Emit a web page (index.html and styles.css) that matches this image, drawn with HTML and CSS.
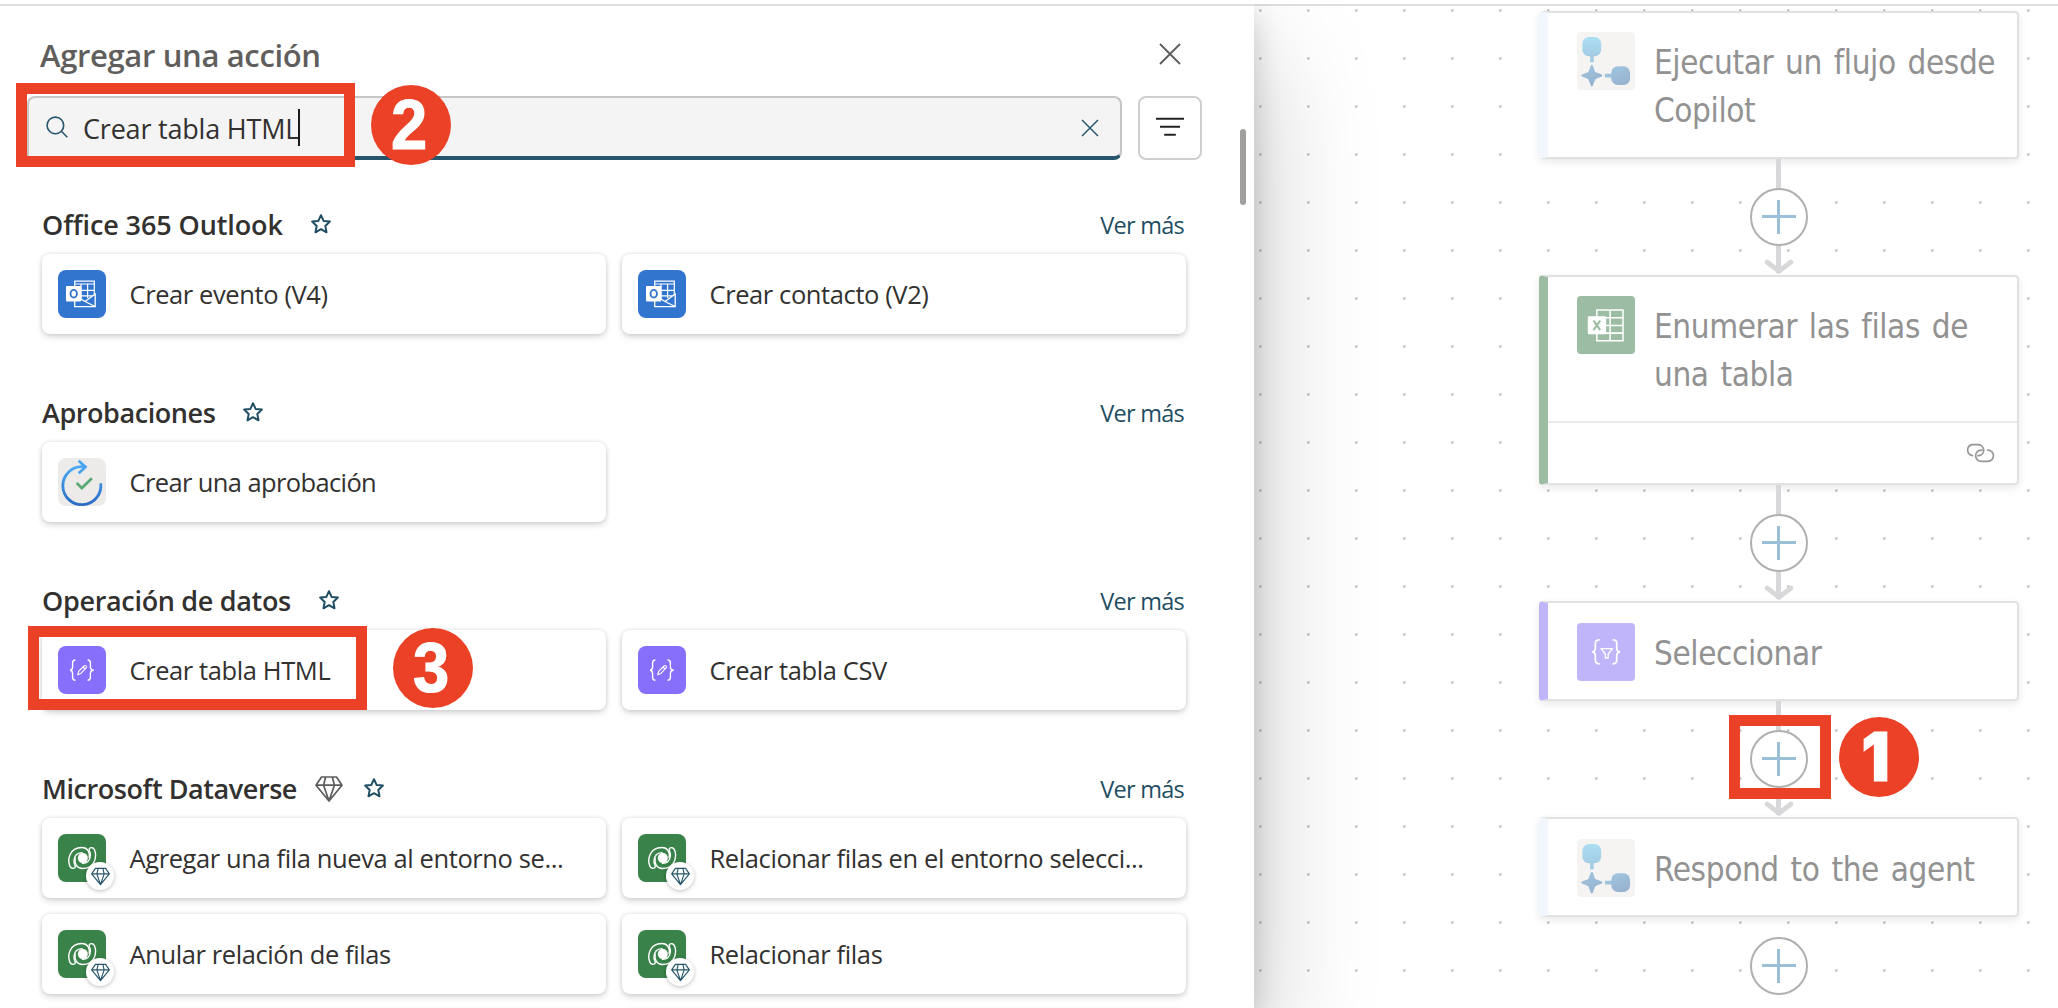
FILE: index.html
```html
<!DOCTYPE html>
<html lang="es">
<head>
<meta charset="utf-8">
<title>Agregar una acción</title>
<link rel="stylesheet" href="styles.css">
</head>
<body>
<svg class="defs" width="0" height="0" aria-hidden="true">
  <defs>
    <linearGradient id="gApproval" x1="0" y1="0" x2="0" y2="1"><stop offset="0" stop-color="#4aa9f3"/><stop offset="1" stop-color="#2b6bc6"/></linearGradient>
    <linearGradient id="gSky" x1="0" y1="0" x2="0" y2="1"><stop offset="0" stop-color="#acdff3"/><stop offset="1" stop-color="#a4cde5"/></linearGradient>
    <linearGradient id="gSteel" x1="0" y1="0" x2="0.4" y2="1"><stop offset="0" stop-color="#a0c6df"/><stop offset="1" stop-color="#98b3d0"/></linearGradient>
    <symbol id="star" viewBox="0 0 20 20"><path d="M10 1.2 12.6 6.900 18.900 7.600 14.300 11.900 15.500 18.300 10 15.200 4.500 18.300 5.700 11.900 1.100 7.600 7.400 6.900Z" fill="none" stroke="#1f4e63" stroke-width="2" stroke-linejoin="round"/></symbol>
    <symbol id="diamond" viewBox="0 0 28 26"><path d="M6.5 1H21.5L27 9.2 14 25 1 9.2ZM1 9.2H27M10.6 1 8.6 9.2 14 25 19.4 9.2 17.4 1" fill="none" stroke="currentColor" stroke-width="1.7" stroke-linejoin="round"/></symbol>
    <symbol id="outlook" viewBox="0 0 48 48">
      <path d="M16.7 16V11.2H36.3V27M16.7 14H36.3M23 14V30M29.6 14V28M23 20.3H36.3M23 25.8H36.3" fill="none" stroke="#fff" stroke-width="1.2"/>
      <path d="M27 31.5 37.200 24V36.600Z" fill="#3275cf"/>
      <path d="M16.7 31V36.6H37.2V24L27 31.5M27 31.5 37 36.5M23 29 27 31.5" fill="none" stroke="#fff" stroke-width="1.3"/>
      <rect x="8" y="16" width="15.4" height="15.4" rx=".8" fill="#fff"/>
      <ellipse cx="15.7" cy="23.7" rx="3.2" ry="3.8" fill="none" stroke="#3275cf" stroke-width="1.9"/>
    </symbol>
    <symbol id="approval" viewBox="0 0 48 48">
      <path d="M42.8 26.3A19 19 0 1 1 23.8 8.7H27" fill="none" stroke="url(#gApproval)" stroke-width="2.8" stroke-linecap="round"/>
      <path d="M20.7 2.7 27.4 8.9 20.7 15.3" fill="none" stroke="#4aa3ee" stroke-width="2.8"/>
      <path d="M18.7 25 23.8 30 33.9 20.2" fill="none" stroke="#58a974" stroke-width="2.7"/>
    </symbol>
    <symbol id="compose" viewBox="0 0 48 48">
      <path d="M17.4 14Q14.6 14 14.6 17V21Q14.6 24 12 24.2 14.6 24.4 14.6 27.4V31.3Q14.6 34.2 17.4 34.2M29.6 14Q32.4 14 32.4 17V21Q32.4 24 35.8 24.2 32.4 24.4 32.4 27.4V31.3Q32.4 34.2 29.6 34.2" fill="none" stroke="#fff" stroke-width="1.4"/>
      <path d="M19.7 28.7 20.8 25.2 26 20Q27.4 19 28.2 20 29 21 28 22.2L22.9 27.4ZM25 21 27 23" fill="none" stroke="#fff" stroke-width="1.1" stroke-linejoin="round"/>
    </symbol>
    <symbol id="dataverse" viewBox="0 0 48 48">
      <g id="blade" fill="none" stroke="#fff" stroke-width="1.4" stroke-linecap="round">
        <path d="M17 33.4C15.5 34.9 13 34.6 12 32.4 9.4 26.5 10.6 13.6 24 13.5 29.5 13.5 32.3 18.5 31.2 23.6M17 33.4C18.4 31.5 15.6 31 16 26.5 16.4 21.5 19.3 18.8 24 18.6"/>
      </g>
      <use href="#blade" transform="rotate(180 24.2 24)"/>
      <circle cx="24.800" cy="24.100" r="5" fill="#fff"/>
    </symbol>
    <symbol id="copilot" viewBox="0 0 57 57">
      <rect x="5.3" y="5" width="18.7" height="19" rx="6.5" fill="url(#gSky)"/>
      <rect x="13" y="23" width="3.6" height="7" fill="#a4cde5"/>
      <path d="M14.7 32.4C16.3 32.4 17 38.5 18.4 39.7 19.8 41 25.2 41.5 25.2 43.2 25.2 45 19.8 45.4 18.4 46.8 17 48 16.3 54 14.7 54 13.1 54 12.4 48 11 46.8 9.6 45.4 4.2 45 4.2 43.2 4.2 41.5 9.6 41 11 39.7 12.4 38.5 13.1 32.4 14.7 32.4Z" fill="url(#gSteel)"/>
      <rect x="27.7" y="41.4" width="7" height="3.7" fill="#9fc3dc"/>
      <rect x="34" y="34" width="18.6" height="18.5" rx="6.5" fill="url(#gSteel)"/>
    </symbol>
    <symbol id="excel" viewBox="0 0 57 57">
      <path d="M19.7 13.8H45.6V44.3H19.7ZM32.8 13.8V44.3M19.7 21.6H45.6M19.7 29.2H45.6M19.7 36.8H45.6" fill="none" stroke="#fff" stroke-width="1.5"/>
      <rect x="10.7" y="20" width="18.2" height="18" rx="1" fill="#fff"/>
      <path d="M16.4 24.3 23 33.9M23 24.3 16.4 33.9" fill="none" stroke="#9cbda4" stroke-width="2.1"/>
    </symbol>
    <symbol id="filterbraces" viewBox="0 0 57 57">
      <path d="M22.6 16.6Q18.2 16.6 18.2 20V24.8Q18.2 28.4 15 28.6 18.2 28.8 18.2 32.4V37Q18.2 40.6 22.6 40.6M35.2 16.6Q39.4 16.6 39.4 20V24.8Q39.4 28.4 42.8 28.6 39.4 28.8 39.4 32.4V37Q39.4 40.6 35.2 40.6" fill="none" stroke="#fff" stroke-width="1.7"/>
      <path d="M23.8 25.4H35.2L30.9 30.7V34.7H28.1V30.7Z" fill="none" stroke="#fff" stroke-width="1.3" stroke-linejoin="round"/>
    </symbol>
    <symbol id="arrow" viewBox="0 0 30 15"><path d="M3.2 3.2 15 12 26.8 3.2" fill="none" stroke="#d8d8da" stroke-width="5" stroke-linecap="round"/></symbol>
  </defs>
</svg>

<div class="app">
  <main class="canvas">
    <div class="flow">
      <section class="node trigger">
        <div class="node-body"><span class="node-icon pale"><svg><use href="#copilot"/></svg></span><p>Ejecutar un flujo desde<br>Copilot</p></div>
      </section>
      <div class="link"><button class="plus" aria-label="Insertar"></button><svg class="arrow"><use href="#arrow"/></svg></div>
      <section class="node excel">
        <div class="node-body"><span class="node-icon green"><svg><use href="#excel"/></svg></span><p>Enumerar las filas de<br>una tabla</p></div>
        <div class="node-foot"><svg width="30" height="20" viewBox="0 0 30 20" fill="none" stroke="#979797" stroke-width="1.7" stroke-linecap="round"><path d="M7.5 12.6A5.6 5.6 0 0 1 7 1.6H13.5A5.6 5.6 0 0 1 14 12.7L12.9 12.7"/><path d="M17 7.1 16 7.1A5.6 5.6 0 0 0 16.400 18.300H23A5.600 5.600 0 0 0 22.700 7.100"/></svg></div>
      </section>
      <div class="link"><button class="plus" aria-label="Insertar"></button><svg class="arrow"><use href="#arrow"/></svg></div>
      <section class="node select">
        <div class="node-body"><span class="node-icon violet"><svg><use href="#filterbraces"/></svg></span><p>Seleccionar</p></div>
      </section>
      <div class="link"><button class="plus" aria-label="Insertar"></button><svg class="arrow"><use href="#arrow"/></svg></div>
      <section class="node trigger">
        <div class="node-body"><span class="node-icon pale"><svg><use href="#copilot"/></svg></span><p>Respond to the agent</p></div>
      </section>
      <button class="plus last" aria-label="Insertar"></button>
    </div>
  </main>

  <aside class="panel">
    <header class="panel-head">
      <h1>Agregar una acción</h1>
      <svg class="close" width="22" height="22" viewBox="0 0 22 22"><path d="M1 1 21 21M21 1 1 21" stroke="#5c5b5a" stroke-width="1.800"/></svg>
    </header>
    <div class="search-row">
      <div class="search">
        <svg width="22" height="22" viewBox="0 0 22 22" fill="none" stroke="#27556b" stroke-width="1.6"><circle cx="9.4" cy="9.4" r="8.3"/><path d="M15.3 15.300 21.300 21.300"/></svg>
        <span class="query">Crear tabla HTML</span><span class="caret"></span>
        <svg class="clear" width="18" height="18" viewBox="0 0 18 18"><path d="M1 1 17 17M17 1 1 17" stroke="#27556b" stroke-width="1.500"/></svg>
      </div>
      <button class="filter" aria-label="Filtrar"><svg width="28" height="20" viewBox="0 0 28 20"><path d="M0 1.8H28M4 9.800H24M8.200 17.800H19.800" stroke="#242424" stroke-width="2.100"/></svg></button>
    </div>

    <div class="groups">
      <section class="group">
        <header><h2 class="loose">Office 365 Outlook</h2><svg class="star"><use href="#star"/></svg><a>Ver más</a></header>
        <div class="cards">
          <div class="card"><span class="icon blue"><svg><use href="#outlook"/></svg></span><span class="label">Crear evento (V4)</span></div>
          <div class="card"><span class="icon blue"><svg><use href="#outlook"/></svg></span><span class="label">Crear contacto (V2)</span></div>
        </div>
      </section>
      <section class="group">
        <header><h2>Aprobaciones</h2><svg class="star"><use href="#star"/></svg><a>Ver más</a></header>
        <div class="cards">
          <div class="card"><span class="icon gray"><svg><use href="#approval"/></svg></span><span class="label tight">Crear una aprobación</span></div>
        </div>
      </section>
      <section class="group">
        <header><h2 class="mid">Operación de datos</h2><svg class="star"><use href="#star"/></svg><a>Ver más</a></header>
        <div class="cards">
          <div class="card"><span class="icon purple"><svg><use href="#compose"/></svg></span><span class="label">Crear tabla HTML</span></div>
          <div class="card"><span class="icon purple"><svg><use href="#compose"/></svg></span><span class="label">Crear tabla CSV</span></div>
        </div>
      </section>
      <section class="group">
        <header><h2>Microsoft Dataverse</h2><svg class="premium"><use href="#diamond"/></svg><svg class="star near"><use href="#star"/></svg><a>Ver más</a></header>
        <div class="cards">
          <div class="card"><span class="icon dv"><svg><use href="#dataverse"/></svg><i class="gem"><svg><use href="#diamond"/></svg></i></span><span class="label">Agregar una fila nueva al entorno se...</span></div>
          <div class="card"><span class="icon dv"><svg><use href="#dataverse"/></svg><i class="gem"><svg><use href="#diamond"/></svg></i></span><span class="label">Relacionar filas en el entorno selecci...</span></div>
          <div class="card"><span class="icon dv"><svg><use href="#dataverse"/></svg><i class="gem"><svg><use href="#diamond"/></svg></i></span><span class="label">Anular relación de filas</span></div>
          <div class="card"><span class="icon dv"><svg><use href="#dataverse"/></svg><i class="gem"><svg><use href="#diamond"/></svg></i></span><span class="label">Relacionar filas</span></div>
          <div class="card"></div>
          <div class="card"></div>
        </div>
      </section>
    </div>
    <span class="scrollbar"></span>
  </aside>

  <div class="mark mark-search"></div><div class="num num-2"><b>2</b></div>
  <div class="mark mark-card"></div><div class="num num-3"><b>3</b></div>
  <div class="mark mark-plus"></div><div class="num num-1"><b>1</b></div>
</div>
</body>
</html>
```
FILE: styles.css
```css
* { box-sizing: border-box; }
body { margin: 0; background: #fff; color: #323130; font-family: "Open Sans", "Noto Sans", sans-serif; }
h1, h2, p { margin: 0; font-weight: 400; }
button { padding: 0; background: #fff; }
.defs { position: absolute; }

.app { position: relative; height: 1008px; padding-top: 4px; overflow: hidden; display: flex; flex-direction: row-reverse; }

/* workflow canvas */
.canvas {
  flex: 1; height: 1004px; border-top: 2px solid #dfdfdf; overflow: hidden;
  background: radial-gradient(circle at 6.3px 4.5px, #bdbdbd 0, #c4c4c4 .9px, transparent 1.7px) 0 0 / 48px 48px #fff;
}
.flow { width: 480px; margin: 5px 0 0 284.5px; display: flex; flex-direction: column; align-items: center; }
.node {
  width: 480px; border: 2px solid #e1e1e1; border-left-width: 9px; border-radius: 4px;
  background: #fff; box-shadow: 0 3px 8px rgba(0,0,0,.09); flex: none;
}
.node.trigger { border-left-color: #f2f7fe; min-height: 100px; }
.node.trigger:first-child { height: 148px; }
.node.excel { border-left-color: #9cbda4; height: 210px; }
.node.select { border-left-color: #c1b5fa; height: 100px; }
.node-body { display: flex; gap: 19.5px; padding: 19px 0 0 29.5px; }
.node.select .node-body, .node.trigger:not(:first-child) .node-body { padding-top: 20px; }
.node-icon { width: 57.5px; height: 57.5px; border-radius: 4px; flex: none; }
.node-icon svg { width: 57.5px; height: 57.5px; display: block; }
.pale { background: #f5f4f3; }
.green { background: #9cbda4; }
.violet { background: #c1b5fa; }
.node p {
  margin-top: 7px; font-family: "DejaVu Sans Condensed", "DejaVu Sans", sans-serif; font-stretch: condensed; font-size: 33px; line-height: 48px;
  letter-spacing: -.4px; word-spacing: 2.8px; color: #929292; white-space: nowrap;
}
.node-foot { height: 62px; margin-top: 22px; border-top: 2px solid #ebebeb; display: flex; justify-content: flex-end; align-items: center; padding: 0 22px 0 0; }
.node.excel .node-body { height: 122px; }
.link {
  height: 116px; width: 100%; flex: none; display: flex; flex-direction: column; align-items: center; justify-content: space-between; padding-top: 29px;
  background: linear-gradient(#d8d8da, #d8d8da) center top / 5px 114px no-repeat;
}
.arrow { width: 30px; height: 15px; flex: none; margin-bottom: 1px; }
.plus {
  width: 58px; height: 58px; border: 2px solid #b0b0b0; border-radius: 50%; flex: none;
  background: linear-gradient(#9bbfd6, #9bbfd6) center / 34px 3.4px no-repeat, linear-gradient(#9bbfd6, #9bbfd6) center / 3.4px 34px no-repeat, #fff;
}
.plus.last { margin-top: 20px; }

/* action panel */
.panel {
  position: relative; flex: none; width: 1254px; height: 1004px; border-top: 2px solid #dfdfdf; background: #fff;
  padding: 29px 52px 0 27px; clip-path: inset(0 -300px 0 0);
  box-shadow: 0 51px 115px rgba(0,0,0,.22), 0 9.6px 29px rgba(0,0,0,.18);
}
.panel-head { display: flex; justify-content: space-between; align-items: center; height: 40px; padding: 0 21px 0 13px; }
.panel-head h1 { font-size: 31px; font-weight: 600; letter-spacing: -.35px; color: #605e5c; line-height: 40px; }
.close { margin-top: -3px; }
.search-row { display: flex; gap: 16px; margin-top: 21px; }
.search {
  position: relative; flex: 1; height: 64px; border: 2px solid #c8c6c4; border-bottom: 4px solid #27556b; border-radius: 8px 8px 8px 4px; background: #f4f4f4;
  display: flex; align-items: center; padding: 0 21px 0 17px;
}
.query { margin-left: 15px; font-size: 27px; letter-spacing: -.2px; line-height: 38px; margin-top: 3px; white-space: nowrap; }
.caret { width: 2px; height: 37px; background: #1b1b1b; margin-left: -1.5px; margin-top: 1px; }
.clear { margin-left: auto; margin-top: 2px; }
.filter { width: 64px; height: 64px; border: 2px solid #cfcfcf; border-radius: 8px; display: flex; align-items: center; justify-content: center; padding-bottom: 3px; }

.groups { margin: 46px 16px 0 15px; }
.group { height: 188px; }
.group header { display: flex; align-items: center; height: 38px; margin-bottom: 10px; padding-right: 2px; }
.group h2 { font-size: 27px; font-weight: 600; letter-spacing: -.43px; line-height: 38px; margin-top: -1px; white-space: nowrap; }
.group h2.loose { letter-spacing: -.1px; }
.group h2.mid { letter-spacing: -.32px; }
.star { width: 20px; height: 20px; margin: -2px 0 0 28px; flex: none; }
.star.near { margin-left: 21.5px; }
.premium { width: 28px; height: 26px; margin: -1px 0 0 17.5px; color: #5f5d5b; flex: none; }
.group a { margin-left: auto; font-size: 23.5px; letter-spacing: -.75px; color: #1f4e63; line-height: 38px; }
.cards { display: grid; grid-template-columns: 564px 564px; gap: 16px; grid-auto-rows: 80px; }
.card {
  display: flex; align-items: center; gap: 23.5px; padding: 0 16px; border-radius: 8px; background: #fff;
  box-shadow: 0 0 4px rgba(0,0,0,.11), 0 3px 6px rgba(0,0,0,.15);
}
.icon { position: relative; width: 48px; height: 48px; border-radius: 8px; flex: none; }
.icon > svg { width: 48px; height: 48px; display: block; }
.blue { background: #3275cf; }
.gray { background: #ecebea; }
.purple { background: #886ffb; }
.dv { background: #398249; }
.label { font-size: 25.5px; letter-spacing: -.4px; line-height: 36px; white-space: nowrap; }
.label.tight { letter-spacing: -.62px; }
.gem {
  position: absolute; left: 28px; top: 28px; width: 28px; height: 28px; border-radius: 50%; background: #fff; color: #27556b;
  display: flex; align-items: center; justify-content: center; box-shadow: 0 1px 4px rgba(0,0,0,.25);
}
.gem svg { width: 19px; height: 19px; }
.scrollbar { position: absolute; left: 1240px; top: 122.5px; width: 6px; height: 76px; border-radius: 3px; background: #a09f9e; }

/* numbered callouts */
.mark { position: absolute; border: 11.5px solid #eb4126; }
.mark-search { left: 16px; top: 83px; width: 339px; height: 84px; }
.mark-card { left: 28px; top: 626px; width: 339px; height: 84px; }
.mark-plus { left: 1729px; top: 715px; width: 102px; height: 84px; }
.num {
  position: absolute; width: 80px; height: 80px; border-radius: 50%; background: #eb4126; color: #fff;
  font: 700 70px/80px "Liberation Sans", sans-serif; text-align: center; padding-right: 4px;
}
.num b { display: block; transform: scaleX(.93); -webkit-text-stroke: 1.2px #fff; }
.num-2 { left: 371px; top: 85px; }
.num-3 { left: 393px; top: 628px; }
.num-1 { left: 1839px; top: 717px; font-family: Inter, sans-serif; font-size: 67px; padding-right: 7px; }
```
